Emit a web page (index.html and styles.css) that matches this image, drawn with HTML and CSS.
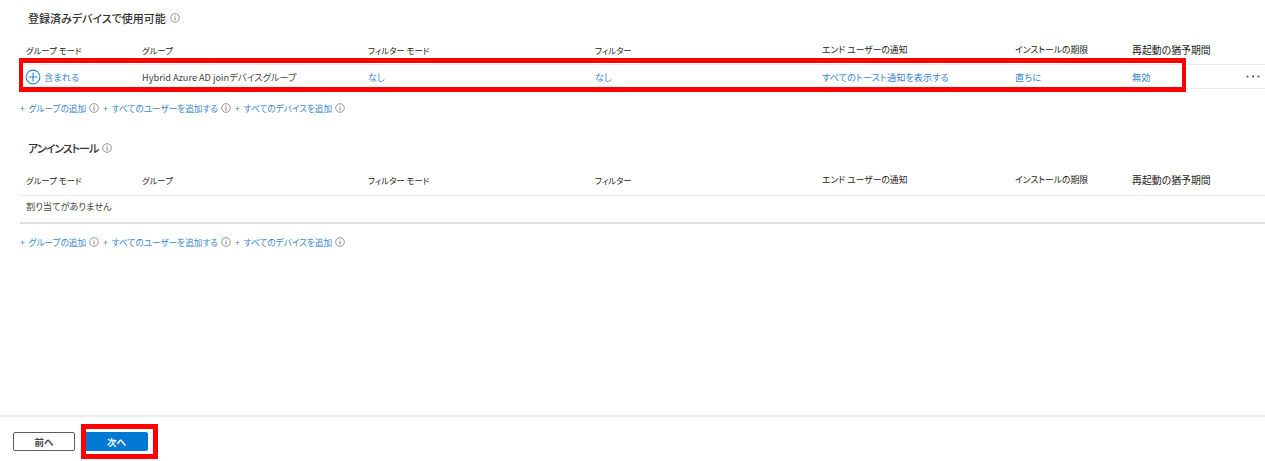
FILE: index.html
```html
<!DOCTYPE html>
<html lang="ja">
<head>
<meta charset="utf-8">
<title>割り当て</title>
<link rel="stylesheet" href="styles.css">
</head>
<body>
<svg class="sprite" width="0" height="0" aria-hidden="true">
  <symbol id="info" viewBox="0 0 10 10">
    <circle cx="5" cy="5" r="4.3" fill="none" stroke="#7a7a7a" stroke-width=".8"/>
    <path d="M5 4.4v3" stroke="#666" stroke-width=".9" fill="none"/>
    <path d="M5 2.6v1" stroke="#666" stroke-width=".9" fill="none"/>
  </symbol>
</svg>
<main class="page">
  <section class="section first">
    <h2 class="title">登録済みデバイスで使用可能<svg class="info title-info"><use href="#info"/></svg></h2>
    <div class="row head">
      <span>グループ モード</span><span>グループ</span><span>フィルター モード</span><span>フィルター</span><span>エンド ユーザーの通知</span><span>インストールの期限</span><span>再起動の猶予期間</span>
    </div>
    <div class="row body-row">
      <a class="mode">
        <svg class="plus" viewBox="0 0 16 16"><circle cx="8" cy="8" r="6.9" fill="none" stroke="#2b88d8" stroke-width="1.1"/><path d="M8 3.6v8.8M3.6 8h8.8" stroke="#2b88d8" stroke-width="1.1" fill="none"/></svg>含まれる
      </a>
      <span class="plain">Hybrid Azure AD joinデバイスグループ</span>
      <a>なし</a><a>なし</a><a>すべてのトースト通知を表示する</a><a>直ちに</a><a>無効</a>
      <svg class="more" viewBox="0 0 14 3"><circle cx="1.5" cy="1.5" r="1.1"/><circle cx="7" cy="1.5" r="1.1"/><circle cx="12.5" cy="1.5" r="1.1"/></svg>
      <div class="callout callout-row"></div>
    </div>
    <div class="links">
      <a>+ グループの追加</a><svg class="info"><use href="#info"/></svg>
      <a>+ すべてのユーザーを追加する</a><svg class="info"><use href="#info"/></svg>
      <a>+ すべてのデバイスを追加</a><svg class="info"><use href="#info"/></svg>
    </div>
  </section>
  <section class="section second">
    <h2 class="title">アンインストール<svg class="info title-info"><use href="#info"/></svg></h2>
    <div class="row head">
      <span>グループ モード</span><span>グループ</span><span>フィルター モード</span><span>フィルター</span><span>エンド ユーザーの通知</span><span>インストールの期限</span><span>再起動の猶予期間</span>
    </div>
    <div class="empty">割り当てがありません</div>
    <div class="links">
      <a>+ グループの追加</a><svg class="info"><use href="#info"/></svg>
      <a>+ すべてのユーザーを追加する</a><svg class="info"><use href="#info"/></svg>
      <a>+ すべてのデバイスを追加</a><svg class="info"><use href="#info"/></svg>
    </div>
  </section>
  <footer class="footer">
    <button class="btn prev" type="button">前へ</button>
    <span class="next-wrap">
      <button class="btn next" type="button">次へ</button>
      <span class="callout callout-next"></span>
    </span>
  </footer>
</main>
</body>
</html>
```

FILE: styles.css
```css
* { box-sizing: border-box; }
html, body { margin: 0; padding: 0; height: 100%; background: #fff; overflow: hidden; }
body {
  font-family: "Noto Sans CJK JP", "Noto Sans", sans-serif;
  font-size: 9.2px;
  line-height: 14px;
  color: #323130;
  font-feature-settings: "palt";
}
.sprite { position: absolute; }
.page { display: flex; flex-direction: column; height: 461px; padding-left: 20px; }
.section.first { padding-top: 11px; }
.section.second { padding-top: 26px; }
.title {
  margin: 0;
  padding-left: 8px;
  font-size: 11px;
  font-weight: 500;
  color: #323130;
  display: flex;
  align-items: center;
}
.second .title { letter-spacing: -1px; }
.title-info { margin-left: 4px; }
.info { width: 10px; height: 10px; flex: none; }
.row {
  display: grid;
  grid-template-columns: 116px 226px 227px 227px 193px 117px 113px 1fr;
  padding-left: 6px;
  align-items: center;
}
.head {
  margin-top: 18px;
  height: 21px;
  padding-bottom: 7px;
  font-size: 8.8px;
  color: #252423;
}
.head span:nth-child(-n+4) { font-size: 8.4px; }
.head span:nth-child(7) { font-size: 9.9px; }
.body-row {
  position: relative;
  height: 25px;
  border-top: 1px solid #edebe9;
  border-bottom: 1px solid #edebe9;
}
a { color: #3a86d0; }
.plain { color: #444; }
.mode { display: flex; align-items: center; margin-left: -1px; }
.plus { width: 16px; height: 16px; margin-right: 3px; }
.more { justify-self: end; margin-right: 5px; width: 14px; height: 3px; fill: #555; grid-column: 8; }
.links { display: flex; align-items: center; height: 14px; margin-top: 12px; font-size: 8.65px; word-spacing: 2px; }
.links .info { margin: 0 4px 0 3px; }
.second .head { border-bottom: 1px solid #edebe9; margin-top: 18px; height: 23px; padding-bottom: 9px; }
.empty { height: 28px; padding: 3px 0 0 6px; border-bottom: 2px solid #e1dfdd; color: #444; }
.second .links { margin-top: 11px; }
.callout { position: absolute; border: 4px solid #f00; pointer-events: none; }
.callout-row { left: -1px; top: -7px; width: 1167px; height: 34px; border-top-width: 5px; border-bottom-width: 5px; }
.footer {
  margin: auto 0 0 -20px;
  height: 46px;
  border-top: 2px solid #eeeeee;
  padding: 15px 0 0 13px;
  display: flex;
  align-items: flex-start;
  gap: 10px;
}
.btn {
  width: 62px;
  height: 19px;
  font: inherit;
  font-size: 9.5px;
  font-weight: 700;
  line-height: 14px;
  padding: 0;
  border-radius: 2px;
}
.prev { background: #fff; border: 1px solid #605e5c; color: #444; }
.next { display: block; width: 63px; background: #0078d4; border: 1px solid #0078d4; color: #fff; }
.next-wrap { position: relative; display: block; }
.callout-next { left: -4px; top: -8px; width: 77px; height: 35px; border-width: 5px; }
```
